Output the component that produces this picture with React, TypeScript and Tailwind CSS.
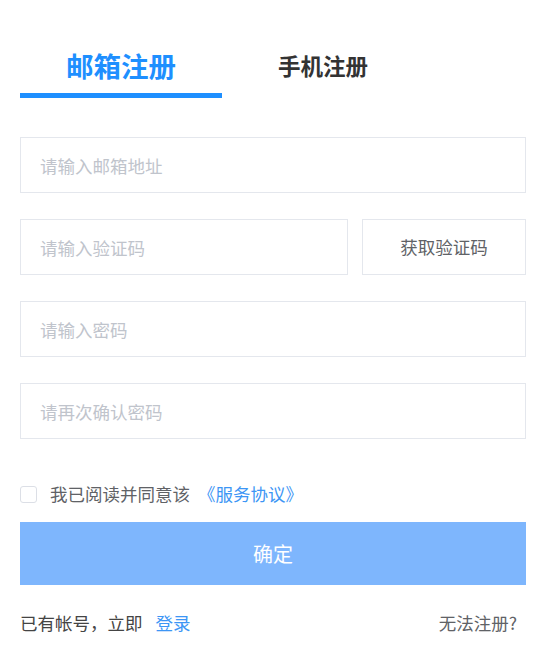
import { useState } from 'react';

// Register form — email tab active

const font = { fontFamily: '"Noto Sans CJK SC", "Noto Sans", sans-serif' };

export default function App() {
  const [tab, setTab] = useState<'email' | 'phone'>('email');
  const [agree, setAgree] = useState(false);

  const inputCls =
    'w-full h-[56px] px-[19px] border border-[#e4e7ed] text-[17.5px] text-[#333] placeholder:text-[#c0c4cc] outline-none focus:border-[#409eff]';

  return (
    <div className="min-h-screen bg-white" style={font}>
      <div className="w-[506px] ml-[20px]">
        {/* Tabs */}
        <div className="flex pt-[48px]">
          <button onClick={() => setTab('email')} className="w-[202px] flex flex-col items-center">
            <span
              className={
                tab === 'email'
                  ? 'h-[34px] leading-[34px] text-[27.5px] font-bold text-[#1e8fff]'
                  : 'h-[34px] leading-[34px] text-[22.5px] font-bold text-[#333]'
              }
            >
              邮箱注册
            </span>
            <span className={tab === 'email' ? 'mt-[11px] h-[5px] w-full bg-[#1e8fff]' : 'mt-[11px] h-[5px] w-full'} />
          </button>
          <button onClick={() => setTab('phone')} className="w-[202px] flex flex-col items-center">
            <span
              className={
                tab === 'phone'
                  ? 'h-[34px] leading-[34px] text-[27.5px] font-bold text-[#1e8fff]'
                  : 'h-[34px] leading-[34px] text-[22.5px] font-bold text-[#333]'
              }
            >
              手机注册
            </span>
            <span className={tab === 'phone' ? 'mt-[11px] h-[5px] w-full bg-[#1e8fff]' : 'mt-[11px] h-[5px] w-full'} />
          </button>
        </div>

        {/* Fields */}
        <div className="mt-[39px] flex flex-col gap-[26px]">
          <input className={inputCls} placeholder="请输入邮箱地址" />
          <div className="flex gap-[14px]">
            <input className={inputCls + ' flex-1'} placeholder="请输入验证码" />
            <button className="w-[164px] shrink-0 h-[56px] border border-[#e4e7ed] text-[17.5px] text-[#606266]">
              获取验证码
            </button>
          </div>
          <input type="password" className={inputCls} placeholder="请输入密码" />
          <input type="password" className={inputCls} placeholder="请再次确认密码" />
        </div>

        {/* Agreement */}
        <label className="mt-[47px] flex items-center h-[17px] text-[17.5px] text-[#606266] cursor-pointer">
          <input
            type="checkbox"
            checked={agree}
            onChange={(e) => setAgree(e.target.checked)}
            className="appearance-none w-[17px] h-[17px] rounded-[3px] border border-[#dcdfe6] checked:bg-[#1e8fff] checked:border-[#1e8fff]"
          />
          <span className="ml-[13px]">我已阅读并同意该</span>
          <span className="ml-[8px] text-[#3d96f5]">《服务协议》</span>
        </label>

        <button className="mt-[19px] w-full h-[63px] bg-[#7eb6fd] text-white text-[20px]">确定</button>

        {/* Footer */}
        <div className="mt-[26px] flex items-center justify-between h-[24px] text-[17.5px] text-[#444]">
          <div>
            已有帐号，立即<a className="ml-[13px] text-[#3d96f5] cursor-pointer">登录</a>
          </div>
          <a className="mr-[9px] text-[#606266] cursor-pointer">无法注册?</a>
        </div>
      </div>
    </div>
  );
}
